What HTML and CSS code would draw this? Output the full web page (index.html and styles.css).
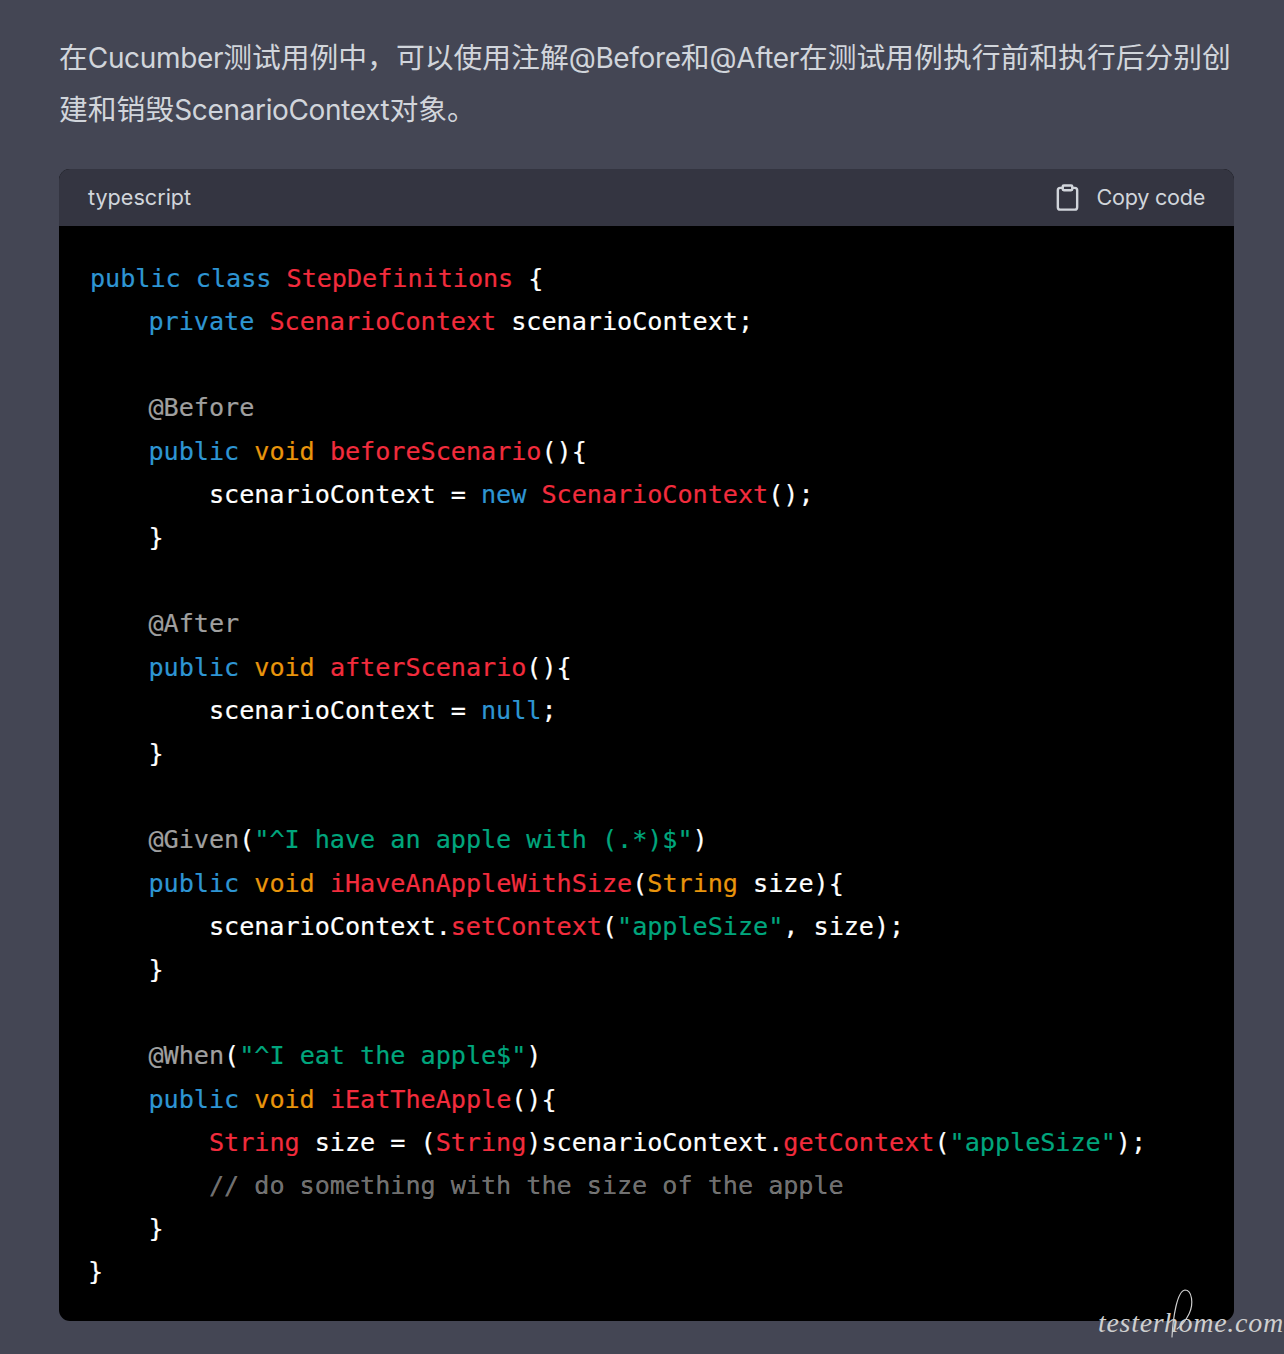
FILE: index.html
```html
<!DOCTYPE html>
<html lang="zh">
<head>
<meta charset="utf-8">
<title>Cucumber</title>
<link rel="stylesheet" href="styles.css">
</head>
<body>
<main class="message">
<p class="intro">在<span class="lt">Cucumber</span>测试用例中，可以使用注解<span class="lt">@Before</span>和<span class="lt">@After</span>在测试用例执行前和执行后分别创建和销毁<span class="lt">ScenarioContext</span>对象。</p>
<section class="codeblock">
<header class="codehead">
<span>typescript</span>
<button class="copy"><svg class="copy-icon" viewBox="0 0 24 24" fill="none" stroke="currentColor" stroke-width="2" stroke-linecap="round" stroke-linejoin="round"><path d="M16 4h2a2 2 0 0 1 2 2v14a2 2 0 0 1-2 2H6a2 2 0 0 1-2-2V6a2 2 0 0 1 2-2h2"/><rect x="8" y="2" width="8" height="4" rx="1" ry="1"/></svg><span class="copy-label">Copy code</span></button>
</header>
<pre class="code"><code><span class="first"><span class="k">public</span> <span class="k">class</span> <span class="t">StepDefinitions</span> {</span>
    <span class="k">private</span> <span class="t">ScenarioContext</span> scenarioContext;

    <span class="a">@Before</span>
    <span class="k">public</span> <span class="o">void</span> <span class="t">beforeScenario</span>(){
        scenarioContext = <span class="k">new</span> <span class="t">ScenarioContext</span>();
    }

    <span class="a">@After</span>
    <span class="k">public</span> <span class="o">void</span> <span class="t">afterScenario</span>(){
        scenarioContext = <span class="k">null</span>;
    }

    <span class="a">@Given</span>(<span class="s">"^I have an apple with (.*)$"</span>)
    <span class="k">public</span> <span class="o">void</span> <span class="t">iHaveAnAppleWithSize</span>(<span class="o">String</span> size){
        scenarioContext.<span class="t">setContext</span>(<span class="s">"appleSize"</span>, size);
    }

    <span class="a">@When</span>(<span class="s">"^I eat the apple$"</span>)
    <span class="k">public</span> <span class="o">void</span> <span class="t">iEatTheApple</span>(){
        <span class="t">String</span> size = (<span class="t">String</span>)scenarioContext.<span class="t">getContext</span>(<span class="s">"appleSize"</span>);
        <span class="c">// do something with the size of the apple</span>
    }
}</code></pre>
</section>
</main>
<div class="watermark"><svg class="loop" viewBox="0 0 40 56" fill="none" stroke="currentColor" stroke-width="1.2" stroke-linecap="round"><path d="M3 49C4 30 8 3 16 2c7 0 9 14 4 24-3 6-8 12-12 15"/></svg><span class="wm-text">testerhome.com</span></div>
</body>
</html>
```
FILE: styles.css
```css
* { box-sizing: border-box; }
html, body { margin: 0; height: 100%; }
body {
  position: relative;
  height: 1354px;
  overflow: hidden;
  background: #444654;
  color: #d1d5db;
  font-family: Inter, "Noto Sans CJK SC", sans-serif;
}
.message { padding: 32px 50px 0 59px; }
.intro {
  margin: 0 0 33px;
  font-size: 28.8px;
  line-height: 51px;
}
.lt { font-size: 28px; letter-spacing: -0.35px; }
.codeblock {
  width: 1175px;
  border-radius: 11px;
  overflow: hidden;
  background: #000;
}
.codehead {
  display: flex;
  align-items: center;
  justify-content: space-between;
  height: 57px;
  padding: 0 29px 2px;
  background: #343541;
  font-size: 21.6px;
}
.copy {
  display: flex;
  align-items: center;
  gap: 15px;
  padding: 0;
  border: 0;
  background: none;
  color: inherit;
  font: inherit;
}
.copy-label { letter-spacing: -0.27px; }
.copy-icon { width: 29px; height: 29px; margin-top: 2px; }
.code {
  margin: 0;
  padding: 30.7px 29px 27.3px;
  color: #fff;
  font-family: "DejaVu Sans Mono", monospace;
  font-size: 25.2px;
  line-height: 43.2px;
  letter-spacing: -0.05px;
  -webkit-text-stroke: 0.2px;
}
.first { margin-left: 2px; }
.k { color: #2e95d3; }
.t { color: #f22c3d; }
.o { color: #e9950c; }
.s { color: #00a67d; }
.a { color: #a0a0a0; }
.c { color: rgba(255,255,255,.45); }
.watermark {
  position: absolute;
  left: 1098px;
  top: 1288px;
  width: 186px;
  height: 60px;
  color: #cfcfcf;
}
.wm-text {
  position: absolute;
  left: 0;
  top: 18px;
  font-family: "Liberation Serif", serif;
  font-style: italic;
  font-size: 28px;
  line-height: 34px;
  letter-spacing: 0.7px;
  white-space: nowrap;
}
.loop {
  position: absolute;
  left: 71px;
  top: 0;
  width: 40px;
  height: 56px;
}
```
